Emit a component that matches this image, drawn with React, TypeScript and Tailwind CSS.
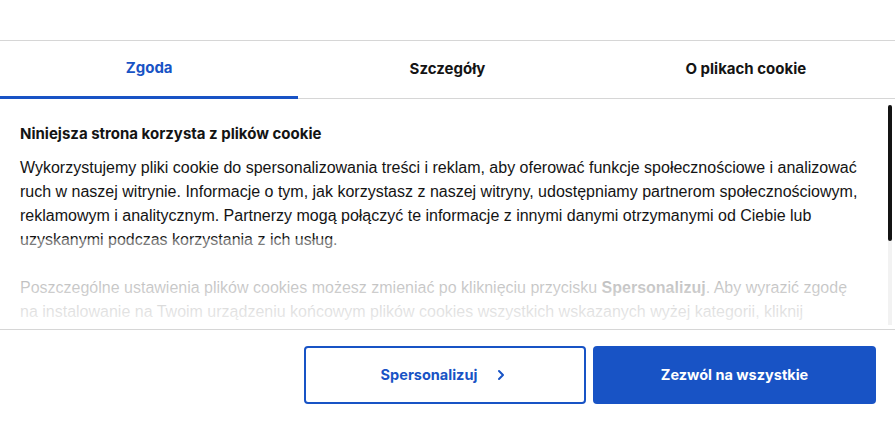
import { ChevronRight } from "lucide-react";

const tabs = ["Zgoda", "Szczegóły", "O plikach cookie"];

export default function App() {
  return (
    <div className="w-[895px] h-[426px] bg-white overflow-hidden font-['Inter',sans-serif] text-[#141414]">
      <div className="h-[41px] border-b border-[#d6d6d6]" />

      <nav className="flex h-[58px] border-b border-[#d6d6d6]">
        {tabs.map((tab, i) => (
          <button
            key={tab}
            className={
              i === 0
                ? "flex-1 flex items-center justify-center text-[15px] font-bold text-[#1853c5] border-b-[3px] border-[#1853c5] -mb-px"
                : "flex-1 flex items-center justify-center text-[15px] font-bold text-[#141414]"
            }
          >
            {tab}
          </button>
        ))}
      </nav>

      <div className="relative h-[231px] overflow-hidden border-b border-[#d6d6d6]">
        <div className="pl-5 pr-[36px] pt-[24px]">
          <h2 className="text-[15px] font-bold mb-[10px]">Niniejsza strona korzysta z plików cookie</h2>
          <div className="font-['Liberation_Sans',Arial,sans-serif] text-[16px] leading-6 text-[#141414]">
            <p className="mb-6">
              Wykorzystujemy pliki cookie do spersonalizowania treści i reklam, aby oferować funkcje społecznościowe i analizować ruch w naszej witrynie. Informacje o tym, jak korzystasz z naszej witryny, udostępniamy partnerom społecznościowym, reklamowym i analitycznym. Partnerzy mogą połączyć te informacje z innymi danymi otrzymanymi od Ciebie lub uzyskanymi podczas korzystania z ich usług.
            </p>
            <p>
              Poszczególne ustawienia plików cookies możesz zmieniać po kliknięciu przycisku <strong>Spersonalizuj</strong>. Aby wyrazić zgodę na instalowanie na Twoim urządzeniu końcowym plików cookies wszystkich wskazanych wyżej kategorii, kliknij <strong>Zezwól na wszystkie</strong>.
            </p>
          </div>
        </div>

        <div className="absolute left-0 right-0 bottom-0 h-[90px] bg-gradient-to-b from-white/40 via-white/75 to-white/95" />

        <div className="absolute right-[3px] top-[6px] bottom-[4px] w-[4px] bg-[#f2f2f2]">
          <div className="h-[136px] w-full bg-[#141414] rounded-sm" />
        </div>
      </div>

      <div className="flex justify-end gap-[7px] pt-4 pr-[19px]">
        <button className="w-[282px] h-[58px] flex items-center justify-center gap-4 rounded border-2 border-[#1853c5] text-[#1853c5] text-[14.5px] font-bold">
          Spersonalizuj
          <ChevronRight className="w-4 h-4" strokeWidth={3} />
        </button>
        <button className="w-[283px] h-[58px] flex items-center justify-center rounded bg-[#1853c5] text-white text-[14.5px] font-bold">
          Zezwól na wszystkie
        </button>
      </div>
    </div>
  );
}
